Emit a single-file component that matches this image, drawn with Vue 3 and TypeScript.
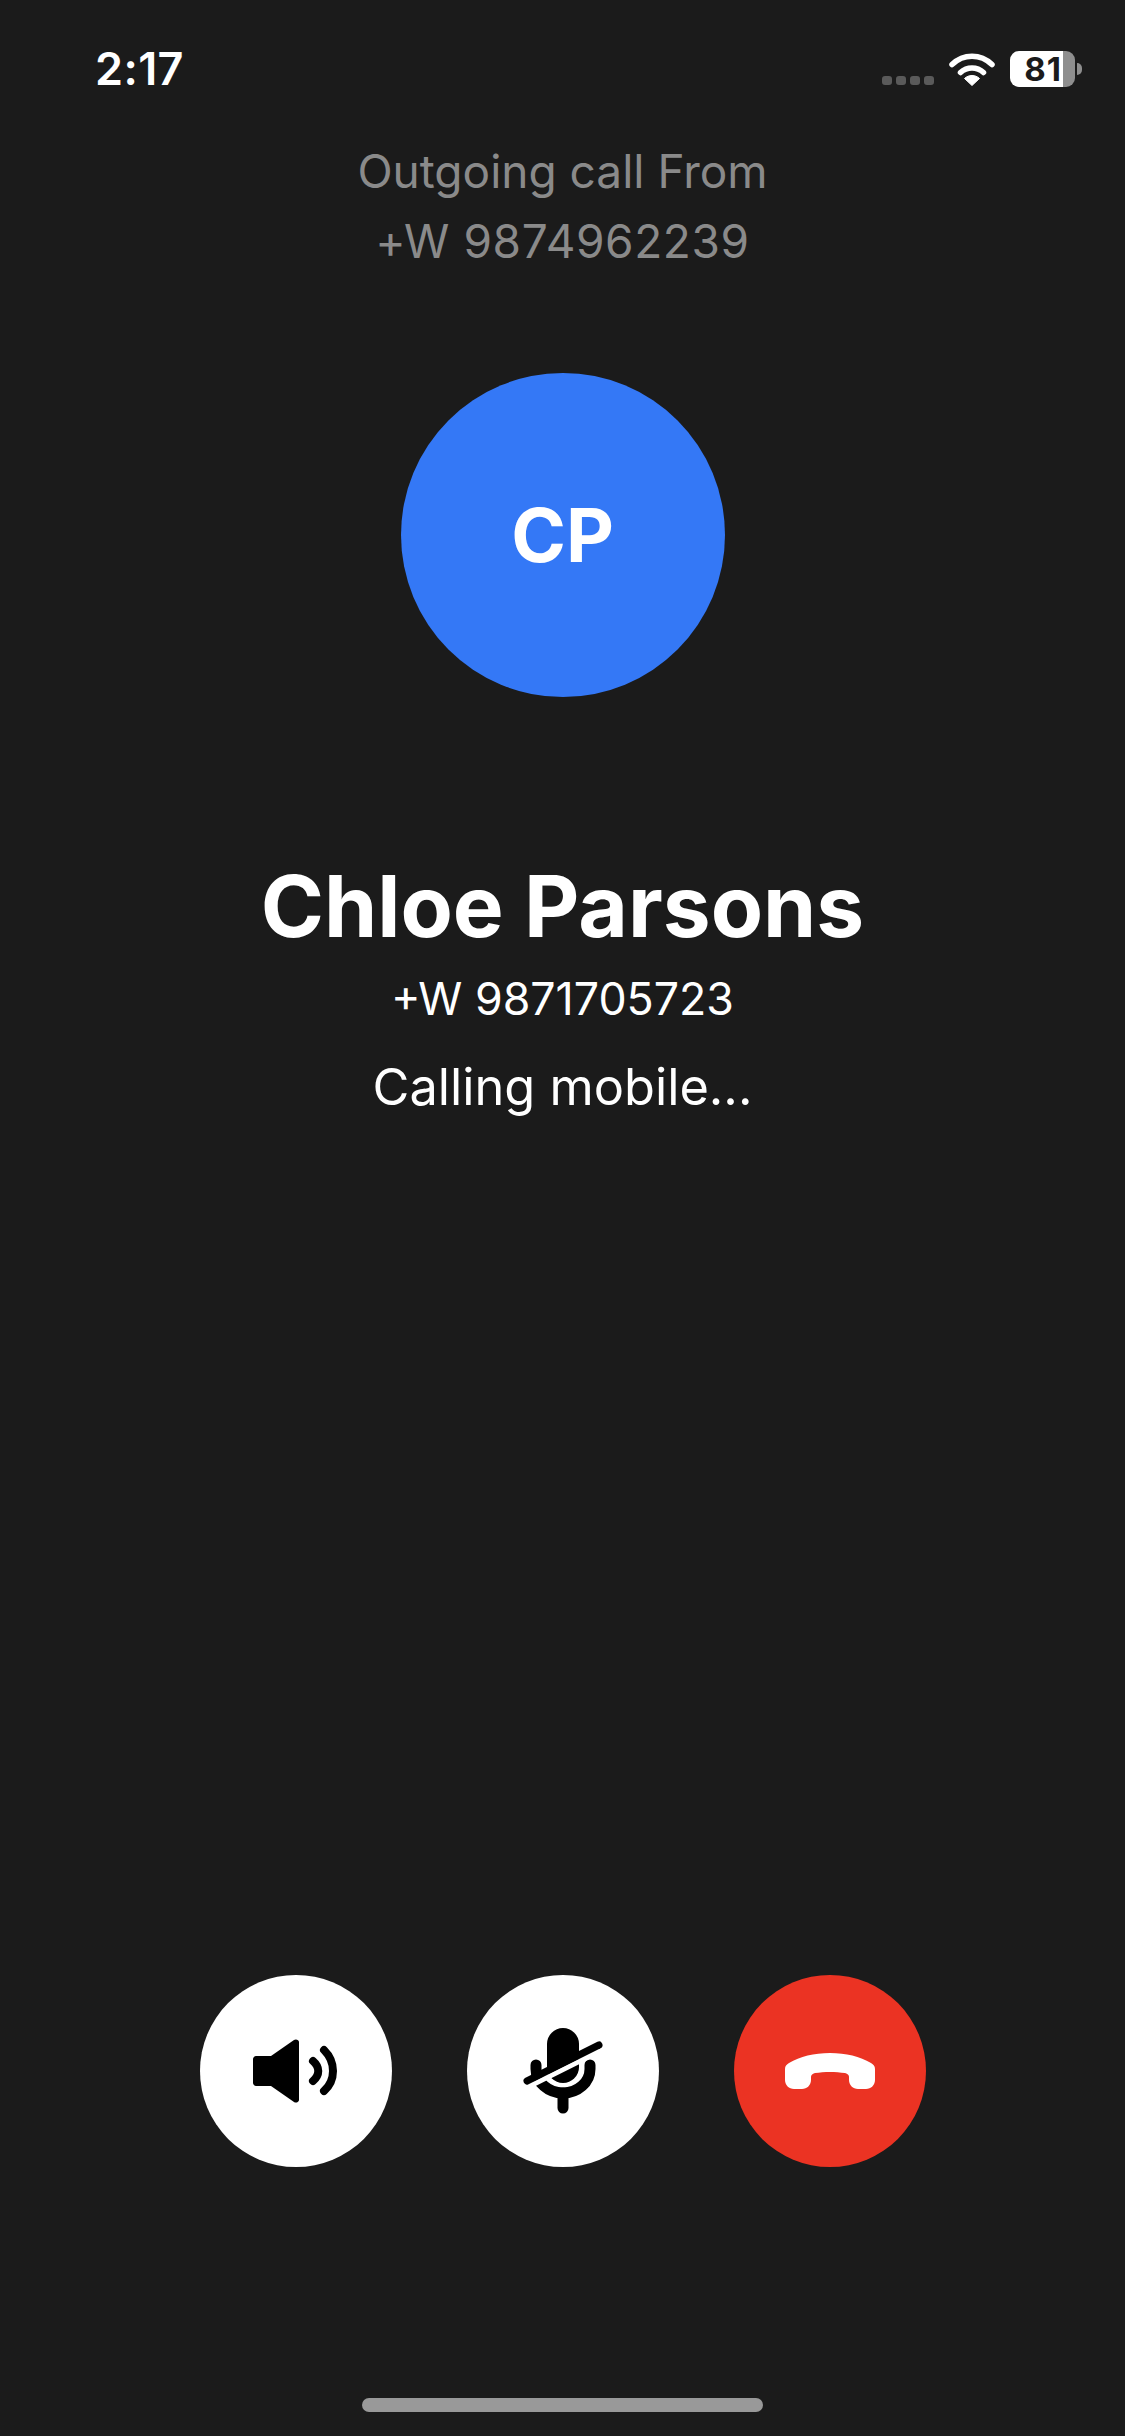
<script setup lang="ts">
const signalDots = [0, 1, 2, 3]
</script>

<template>
  <div class="screen">
    <header class="status">
      <span class="time">2:17</span>
      <div class="indicators">
        <div class="signal">
          <i v-for="d in signalDots" :key="d" class="dot"></i>
        </div>
        <svg class="wifi" width="46" height="34" viewBox="0 0 46 34">
          <path d="M3 12.500C14.500 1.500 31.500 1.500 43 12.500" fill="none" stroke="#fff" stroke-width="5.500" stroke-linecap="round" />
          <path d="M11.500 20.500C18 14.500 28 14.500 34.500 20.500" fill="none" stroke="#fff" stroke-width="5.500" stroke-linecap="round" />
          <path d="M23 33.500L15.500 26.500C19.500 22.500 26.500 22.500 30.500 26.500Z" fill="#fff" stroke="#fff" stroke-width="1" stroke-linejoin="round" />
        </svg>
        <div class="battery">
          <div class="cell">
            <span class="level">81</span>
            <i class="rest"></i>
          </div>
          <i class="nub"></i>
        </div>
      </div>
    </header>

    <section class="origin">
      <p>Outgoing call From</p>
      <p class="origin-number">+W 9874962239</p>
    </section>

    <div class="avatar">CP</div>

    <h1 class="name">Chloe Parsons</h1>
    <p class="number">+W 9871705723</p>
    <p class="state">Calling mobile...</p>

    <div class="controls">
      <button class="round">
        <svg width="192" height="192" viewBox="0 0 192 192">
          <path d="M56 81H71L94 65C96 63.500 99 65 99 67V125C99 127 96 128.500 94 127L71 111H56C54.500 111 53 109.500 53 108V84C53 82.500 54.500 81 56 81Z" fill="#000" />
          <path d="M113 86C120 92 120 100 113 106" fill="none" stroke="#000" stroke-width="8" stroke-linecap="round" />
          <path d="M124 75C136 87 136 105 124 116" fill="none" stroke="#000" stroke-width="8" stroke-linecap="round" />
        </svg>
      </button>
      <button class="round">
        <svg width="192" height="192" viewBox="0 0 192 192">
          <path d="M80 69A16 16 0 0 1 112 69V92A16 16 0 0 1 80 92Z" fill="#000" />
          <path d="M69 90V94A27 24 0 0 0 123 94V90" fill="none" stroke="#000" stroke-width="11" stroke-linecap="round" />
          <path d="M96 118V133" fill="none" stroke="#000" stroke-width="11" stroke-linecap="round" />
          <path d="M60 112.500L122 81.500" fill="none" stroke="#fff" stroke-width="5" />
          <path d="M60 106L132 70" fill="none" stroke="#000" stroke-width="7" stroke-linecap="round" />
        </svg>
      </button>
      <button class="round end">
        <svg width="90" height="36" viewBox="0 0 90 36">
          <path d="M0 16C0 13 1.500 11.500 4 10C15 3.500 29 0 45 0C61 0 75 3.500 86 10C88.500 11.500 90 13 90 16V27C90 32 86 36 81 36H73C68 36 64 32 64 27V24C64 22 63 21 60 20C51 18.500 39 18.500 30 20C27 21 26 22 26 24V27C26 32 22 36 17 36H9C4 36 0 32 0 27Z" fill="#fff" />
        </svg>
      </button>
    </div>

    <div class="home-bar"></div>
  </div>
</template>

<style scoped>
.screen {
  width: 1125px;
  height: 2436px;
  background: #1b1b1b;
  color: #fff;
  font-family: Inter, "Liberation Sans", sans-serif;
  display: flex;
  flex-direction: column;
  align-items: center;
  overflow: hidden;
}

.status {
  align-self: stretch;
  height: 136px;
  padding: 0 43px 0 95px;
  display: flex;
  justify-content: space-between;
  align-items: flex-start;
  flex-shrink: 0;
}

.time {
  margin-top: 45px;
  font-size: 45px;
  line-height: 48px;
  font-weight: 600;
  letter-spacing: 0.4px;
}

.indicators {
  margin-top: 51px;
  display: flex;
  align-items: flex-start;
}

.signal {
  display: flex;
  gap: 4px;
  margin-top: 25px;
  margin-right: 15px;
}

.dot {
  width: 10px;
  height: 9px;
  border-radius: 3px;
  background: #5a5a5a;
}

.wifi {
  margin-top: 1px;
  margin-right: 15px;
}

.battery {
  display: flex;
  align-items: center;
  gap: 2px;
}

.cell {
  width: 65px;
  height: 36px;
  display: flex;
}

.level {
  flex: 1;
  height: 36px;
  border-radius: 9px 0 0 9px;
  background: #fff;
  color: #1b1b1b;
  font-size: 33px;
  line-height: 36px;
  font-weight: 700;
  letter-spacing: 1px;
  text-align: right;
  padding-right: 1px;
}

.rest {
  width: 12px;
  border-radius: 0 9px 9px 0;
  background: #8e8e8e;
}

.nub {
  width: 5px;
  height: 12px;
  border-radius: 0 6px 6px 0;
  background: #8e8e8e;
}

.origin {
  color: #8a8a8a;
  font-size: 46px;
  line-height: 70px;
  text-align: center;
  flex-shrink: 0;
}

.origin p,
.number,
.state {
  margin: 0;
}

.origin-number {
  letter-spacing: 0.6px;
}

.avatar {
  width: 324px;
  height: 324px;
  margin-top: 97px;
  border-radius: 50%;
  background: #3478f6;
  font-size: 74px;
  font-weight: 700;
  display: flex;
  align-items: center;
  justify-content: center;
  flex-shrink: 0;
}

.name {
  margin: 155px 0 0;
  font-size: 85.500px;
  line-height: 108px;
  font-weight: 700;
}

.number {
  margin-top: 12px;
  font-size: 44.700px;
  line-height: 54px;
}

.state {
  margin-top: 31px;
  font-size: 50.500px;
  line-height: 60px;
}

.controls {
  margin-top: auto;
  display: flex;
  gap: 75px;
}

.round {
  width: 192px;
  height: 192px;
  padding: 0;
  border: 0;
  border-radius: 50%;
  background: #fff;
  display: flex;
  align-items: center;
  justify-content: center;
}

.end {
  background: #eb3323;
}

.home-bar {
  width: 401px;
  height: 14px;
  margin-top: 231px;
  margin-bottom: 24px;
  border-radius: 7px;
  background: #999;
  flex-shrink: 0;
}
</style>

<style>
html,
body {
  margin: 0;
  background: #1b1b1b;
}
</style>
